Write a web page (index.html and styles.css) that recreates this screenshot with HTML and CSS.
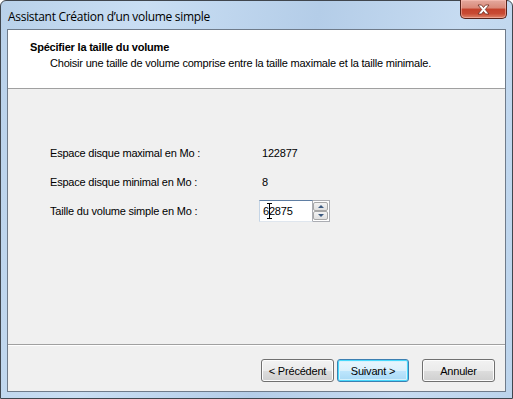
FILE: index.html
```html
<!DOCTYPE html>
<html lang="fr">
<head>
    <meta charset="UTF-8">
    <title>Assistant Création d'un volume simple</title>
    <link rel="stylesheet" href="styles.css">
</head>
<body>
    <div class="window">
        <div class="titlebar">
            <span class="title">Assistant Création d’un volume simple</span>
            <div class="close">
                <svg width="15" height="11" viewBox="0 0 15 11">
                    <path d="M2 1 L5.5 1 L7.5 3.5 L9.5 1 L13 1 L9.3 5.5 L13 10 L9.5 10 L7.5 7.5 L5.5 10 L2 10 L5.7 5.5 Z" fill="#fff" stroke="#6b2a1f" stroke-width="0.8"/>
                </svg>
            </div>
        </div>

        <div class="client">
            <div class="header">
                <div class="header-title">Spécifier la taille du volume</div>
                <div class="header-sub">Choisir une taille de volume comprise entre la taille maximale et la taille minimale.</div>
            </div>

            <div class="body">
                <div class="row">
                    <span class="label">Espace disque maximal en Mo :</span>
                    <span class="value">122877</span>
                </div>
                <div class="row">
                    <span class="label">Espace disque minimal en Mo :</span>
                    <span class="value">8</span>
                </div>
                <div class="row">
                    <span class="label">Taille du volume simple en Mo :</span>
                    <div class="spin">
                        <div class="spin-input">62875</div>
                        <div class="spin-btns">
                            <div class="spin-btn"><span class="arrow-up"></span></div>
                            <div class="spin-btn"><span class="arrow-down"></span></div>
                        </div>
                        <!-- mouse I-beam over the field -->
                        <div class="ibeam"></div>
                    </div>
                </div>
            </div>

            <div class="footer">
                <button class="btn">&lt; Précédent</button>
                <button class="btn btn-default">Suivant &gt;</button>
                <button class="btn btn-cancel">Annuler</button>
            </div>
        </div>
    </div>
</body>
</html>
```

FILE: styles.css
```css
* {
    box-sizing: border-box;
}
body {
    margin: 0;
    padding: 0;
    background: #fff;
    font-family: "Liberation Sans", Arial, sans-serif;
    font-size: 11px;
    letter-spacing: -0.2px;
    color: #000;
}
.window {
    width: 513px;
    height: 399px;
    border: 1px solid #40464e;
    border-radius: 6px 6px 0 0;
    background: linear-gradient(100deg, #b9d1ea 0%, #c9def3 25%, #b4cde8 55%, #c6dbf1 80%, #bcd4ec 100%);
    padding: 0 6px 6px 6px;
    display: flex;
    flex-direction: column;
}
.titlebar {
    height: 28px;
    display: flex;
    justify-content: space-between;
    align-items: flex-start;
}
.title {
    font-family: "Open Sans", "Liberation Sans", sans-serif;
    font-size: 12px;
    margin-top: 7px;
    margin-left: 1px;
    color: #000;
    letter-spacing: -0.3px;
}
.close {
    width: 47px;
    height: 19px;
    margin-top: -1px;
    margin-right: -1px;
    border: 1px solid #57231b;
    border-top: none;
    border-radius: 0 0 5px 5px;
    background: linear-gradient(#e4a99e 0%, #d98878 45%, #c3412b 50%, #c84a33 75%, #dd8368 100%);
    box-shadow: inset 0 0 0 1px rgba(255, 200, 190, 0.5);
    display: flex;
    justify-content: center;
    align-items: center;
}
.client {
    flex: 1;
    border: 1px solid #6f7b8a;
    background: #f0f0f0;
    display: flex;
    flex-direction: column;
}
.header {
    height: 59px;
    background: #fff;
    border-bottom: 1px solid #a0a0a0;
    padding: 10px 0 0 22px;
}
.header-title {
    font-weight: bold;
    font-size: 11px;
    line-height: 14px;
}
.header-sub {
    padding-left: 20px;
    margin-top: 2px;
    line-height: 14px;
}
.body {
    flex: 1;
    padding: 49px 0 0 42px;
}
.row {
    display: flex;
    align-items: center;
    height: 29px;
}
.label {
    width: 211px;
}
.value {
    padding-left: 1px;
}
.spin {
    display: flex;
    margin-left: -2px;
    position: relative;
}
.spin-input {
    width: 54px;
    height: 22px;
    border: 1px solid #abadb3;
    border-top-color: #5f7ea3;
    border-left-color: #c5d5e6;
    border-bottom-color: #dfe6ee;
    background: #fff;
    padding: 4px 0 0 3px;
    line-height: 13px;
}
.spin-btns {
    display: flex;
    flex-direction: column;
    width: 17px;
    height: 22px;
    border: 1px solid #abadb3;
    border-left: none;
    background: #fff;
    padding: 1px 1px 1px 0;
}
.spin-btn {
    flex: 1;
    border: 1px solid #a7a7a7;
    border-radius: 2px;
    background: linear-gradient(#f3f3f3, #e0e0e0);
    display: flex;
    justify-content: center;
    align-items: center;
}
.arrow-up {
    border-left: 3px solid transparent;
    border-right: 3px solid transparent;
    border-bottom: 3px solid #3d5a80;
}
.arrow-down {
    border-left: 3px solid transparent;
    border-right: 3px solid transparent;
    border-top: 3px solid #3d5a80;
}
.ibeam {
    position: absolute;
    left: 10px;
    top: 3px;
    width: 1px;
    height: 16px;
    background: #000;
}
.ibeam::before,
.ibeam::after {
    content: "";
    position: absolute;
    left: -2px;
    width: 5px;
    height: 1px;
    background: #000;
}
.ibeam::before {
    top: 0;
}
.ibeam::after {
    bottom: 0;
}
.footer {
    height: 47px;
    border-top: 1px solid #a0a0a0;
    box-shadow: inset 0 1px 0 #fff;
    display: flex;
    align-items: flex-start;
    padding: 14px 0 0 253px;
}
.btn {
    width: 73px;
    height: 23px;
    font-family: "Liberation Sans", Arial, sans-serif;
    font-size: 11px;
    letter-spacing: -0.2px;
    color: #000;
    border: 1px solid #707070;
    border-radius: 3px;
    background: linear-gradient(#f2f2f2 0%, #ebebeb 50%, #dddddd 51%, #cfcfcf 100%);
    box-shadow: inset 0 0 0 1px #fcfcfc;
    padding: 0;
    margin-right: 3px;
}
.btn-default {
    width: 72px;
    border-color: #3c7fb1;
    box-shadow: inset 0 0 0 1px #48d8fb, inset 0 0 0 2px #d6f1fc;
    background: linear-gradient(#eaf6fd 0%, #d9f0fc 50%, #bee6fd 51%, #a7d9f5 100%);
}
.btn-cancel {
    margin-left: 10px;
}
```
